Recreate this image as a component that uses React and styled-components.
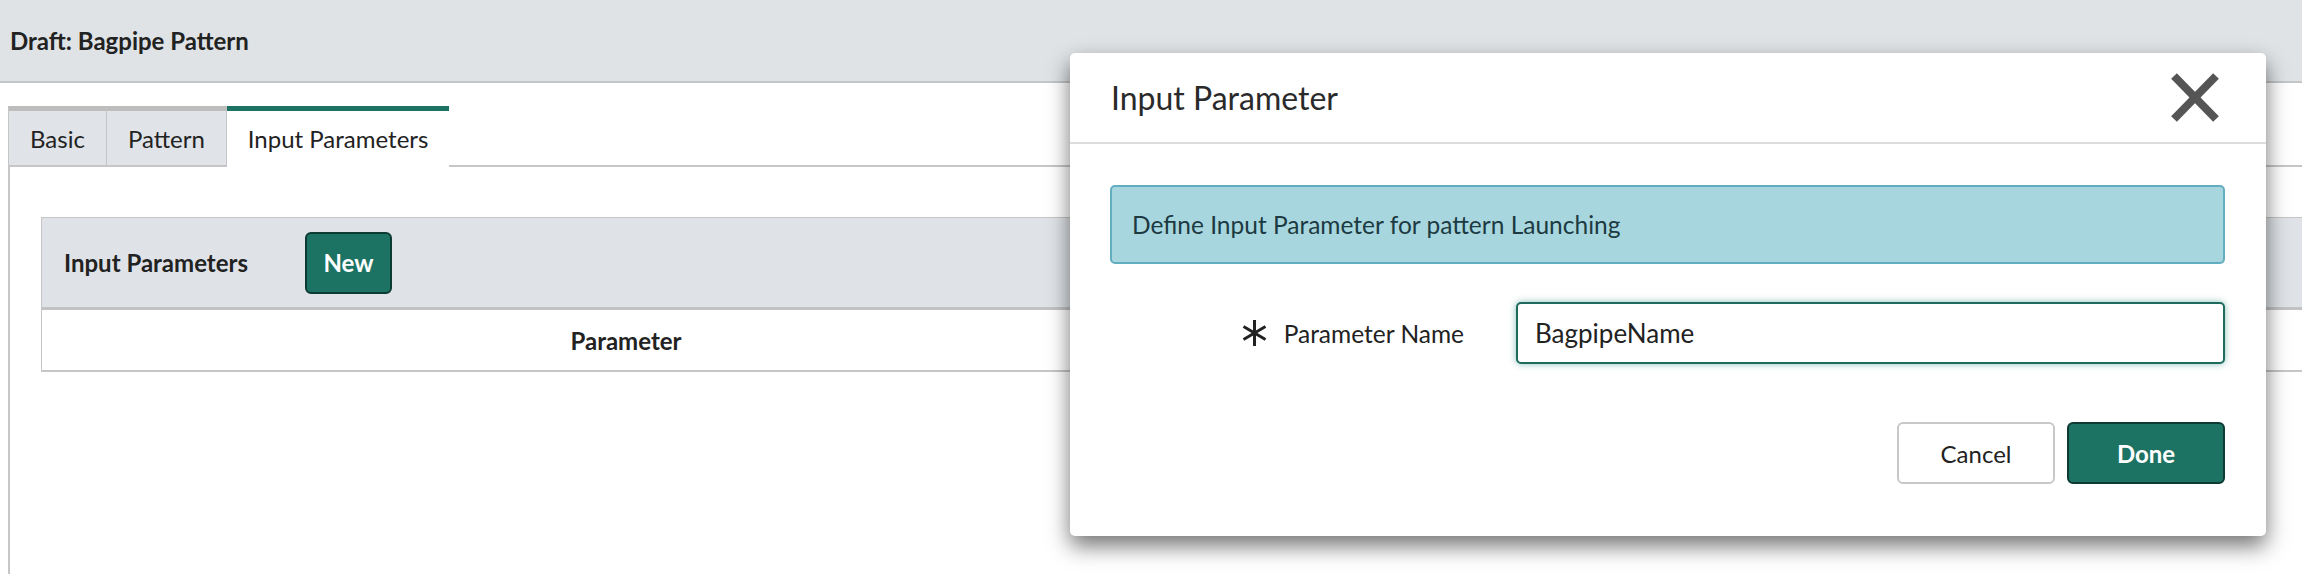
import styled, { createGlobalStyle } from 'styled-components'

const GlobalStyle = createGlobalStyle`
  html, body {
    margin: 0;
    padding: 0;
    background: #fff;
    font-family: Lato, "Open Sans", "Liberation Sans", sans-serif;
    color: #222;
  }
  #root {
    min-height: 574px;
  }
`

const Page = styled.div`
  position: relative;
  width: 2302px;
  height: 574px;
  overflow: hidden;
  background: #fff;
`

const Header = styled.div`
  display: flex;
  align-items: center;
  height: 81px;
  padding-left: 10px;
  background: #dfe3e6;
  border-bottom: 2px solid #c3c5c7;
`

const Title = styled.h1`
  margin: 0;
  font-size: 24px;
  font-weight: 700;
  color: #222;
`

const Tabs = styled.div`
  display: flex;
  margin-top: 23px;
  padding-left: 8px;
`

const Tab = styled.div`
  display: flex;
  align-items: center;
  height: 54px;
  padding: 0 21px;
  font-size: 24px;
  color: #222;
  background: ${({ active }) => (active ? '#fff' : '#e0e4e8')};
  border-top: 5px solid ${({ active }) => (active ? '#1d7363' : '#bdbdbd')};
  border-left: ${({ active }) => (active ? '0' : '1px solid #c6c6c6')};
  border-right: ${({ active }) => (active ? '0' : '1px solid #c6c6c6')};
  border-bottom: 2px solid ${({ active }) => (active ? '#fff' : '#c6c6c6')};
  & + & {
    border-left: 0;
  }
`

const TabFill = styled.div`
  flex: 1;
  align-self: flex-end;
  border-bottom: 2px solid #c6c6c6;
`

const Panel = styled.div`
  margin-left: 8px;
  height: 420px;
  padding: 50px 0 0 31px;
  border-left: 2px solid #c6c6c6;
`

const Table = styled.div`
  border-left: 1px solid #c6c6c6;
`

const TableHead = styled.div`
  display: flex;
  align-items: center;
  gap: 57px;
  height: 89px;
  padding-left: 22px;
  background: #dfe3e7;
  border-top: 1px solid #c6c6c6;
  border-bottom: 3px solid #c2c2c2;
`

const HeadTitle = styled.span`
  font-size: 24px;
  font-weight: 700;
  color: #222;
`

const Button = styled.button`
  height: 62px;
  font-family: inherit;
  font-size: 24px;
  border-radius: 6px;
  cursor: pointer;
  padding: 0;
  width: ${({ width }) => width || 158}px;
  font-weight: ${({ primary }) => (primary ? 700 : 400)};
  color: ${({ primary }) => (primary ? '#fff' : '#222')};
  background: ${({ primary }) => (primary ? '#1d7363' : '#fff')};
  border: 2px solid ${({ primary }) => (primary ? '#0d3b33' : '#c8c8c8')};
`

const TableRow = styled.div`
  display: grid;
  grid-template-columns: 1168px 1fr;
  align-items: center;
  height: 60px;
  border-bottom: 2px solid #c6c6c6;
`

const HeadCell = styled.div`
  text-align: center;
  font-size: 24px;
  font-weight: 700;
  color: #222;
`

const Modal = styled.div`
  position: absolute;
  left: 1070px;
  top: 53px;
  width: 1196px;
  background: #fff;
  border-radius: 5px;
  box-shadow: 0 10px 22px rgba(0, 0, 0, 0.55);
`

const ModalHeader = styled.div`
  display: flex;
  align-items: center;
  justify-content: space-between;
  height: 89px;
  padding: 0 47px 0 41px;
  border-bottom: 2px solid #dcdcdc;
`

const ModalTitle = styled.h2`
  margin: 0;
  font-size: 32px;
  font-weight: 400;
  color: #2a2a2a;
`

const Close = styled.button`
  display: flex;
  padding: 0;
  border: 0;
  background: none;
  cursor: pointer;
`

const ModalBody = styled.div`
  display: flex;
  flex-direction: column;
  padding: 41px 41px 52px 40px;
`

const Info = styled.div`
  display: flex;
  align-items: center;
  height: 75px;
  padding-left: 20px;
  background: #a8d6de;
  border: 2px solid #62adc0;
  border-radius: 5px;
  font-size: 24.5px;
  color: #1c3a42;
`

const FormRow = styled.div`
  display: flex;
  align-items: center;
  gap: 52px;
  margin-top: 38px;
`

const Label = styled.label`
  display: flex;
  align-items: center;
  justify-content: flex-end;
  gap: 17px;
  width: 354px;
  font-size: 24.5px;
  color: #222;
`

const Input = styled.input`
  flex: 1;
  box-sizing: border-box;
  height: 62px;
  padding: 0 17px;
  font-family: inherit;
  font-size: 26px;
  color: #222;
  border: 2px solid #1e6a5d;
  border-radius: 5px;
  outline: none;
  box-shadow: 0 0 7px rgba(40, 140, 125, 0.55);
`

const Actions = styled.div`
  display: flex;
  justify-content: flex-end;
  gap: 12px;
  margin-top: 58px;
`

const Asterisk = () => (
  <svg width="25" height="26" viewBox="0 0 25 26">
    <g stroke="#222" strokeWidth="3" strokeLinecap="butt">
      <line x1="12.5" y1="0" x2="12.5" y2="26" />
      <line x1="1.5" y1="6.5" x2="23.5" y2="19.5" />
      <line x1="1.5" y1="19.5" x2="23.5" y2="6.5" />
    </g>
  </svg>
)

const CloseIcon = () => (
  <svg width="48" height="49" viewBox="0 0 48 49">
    <g stroke="#555" strokeWidth="8" strokeLinecap="butt">
      <line x1="3" y1="3" x2="45" y2="46" />
      <line x1="45" y1="3" x2="3" y2="46" />
    </g>
  </svg>
)

export default function App() {
  return (
    <Page>
      <GlobalStyle />
      <Header>
        <Title>Draft: Bagpipe Pattern</Title>
      </Header>
      <Tabs>
        <Tab>Basic</Tab>
        <Tab>Pattern</Tab>
        <Tab active>Input Parameters</Tab>
        <TabFill />
      </Tabs>
      <Panel>
        <Table>
          <TableHead>
            <HeadTitle>Input Parameters</HeadTitle>
            <Button primary width={87}>New</Button>
          </TableHead>
          <TableRow>
            <HeadCell>Parameter</HeadCell>
            <div />
          </TableRow>
        </Table>
      </Panel>

      <Modal>
        <ModalHeader>
          <ModalTitle>Input Parameter</ModalTitle>
          <Close aria-label="Close"><CloseIcon /></Close>
        </ModalHeader>
        <ModalBody>
          <Info>Define Input Parameter for pattern Launching</Info>
          <FormRow>
            <Label>
              <Asterisk />
              Parameter Name
            </Label>
            <Input defaultValue="BagpipeName" />
          </FormRow>
          <Actions>
            <Button>Cancel</Button>
            <Button primary>Done</Button>
          </Actions>
        </ModalBody>
      </Modal>
    </Page>
  )
}
